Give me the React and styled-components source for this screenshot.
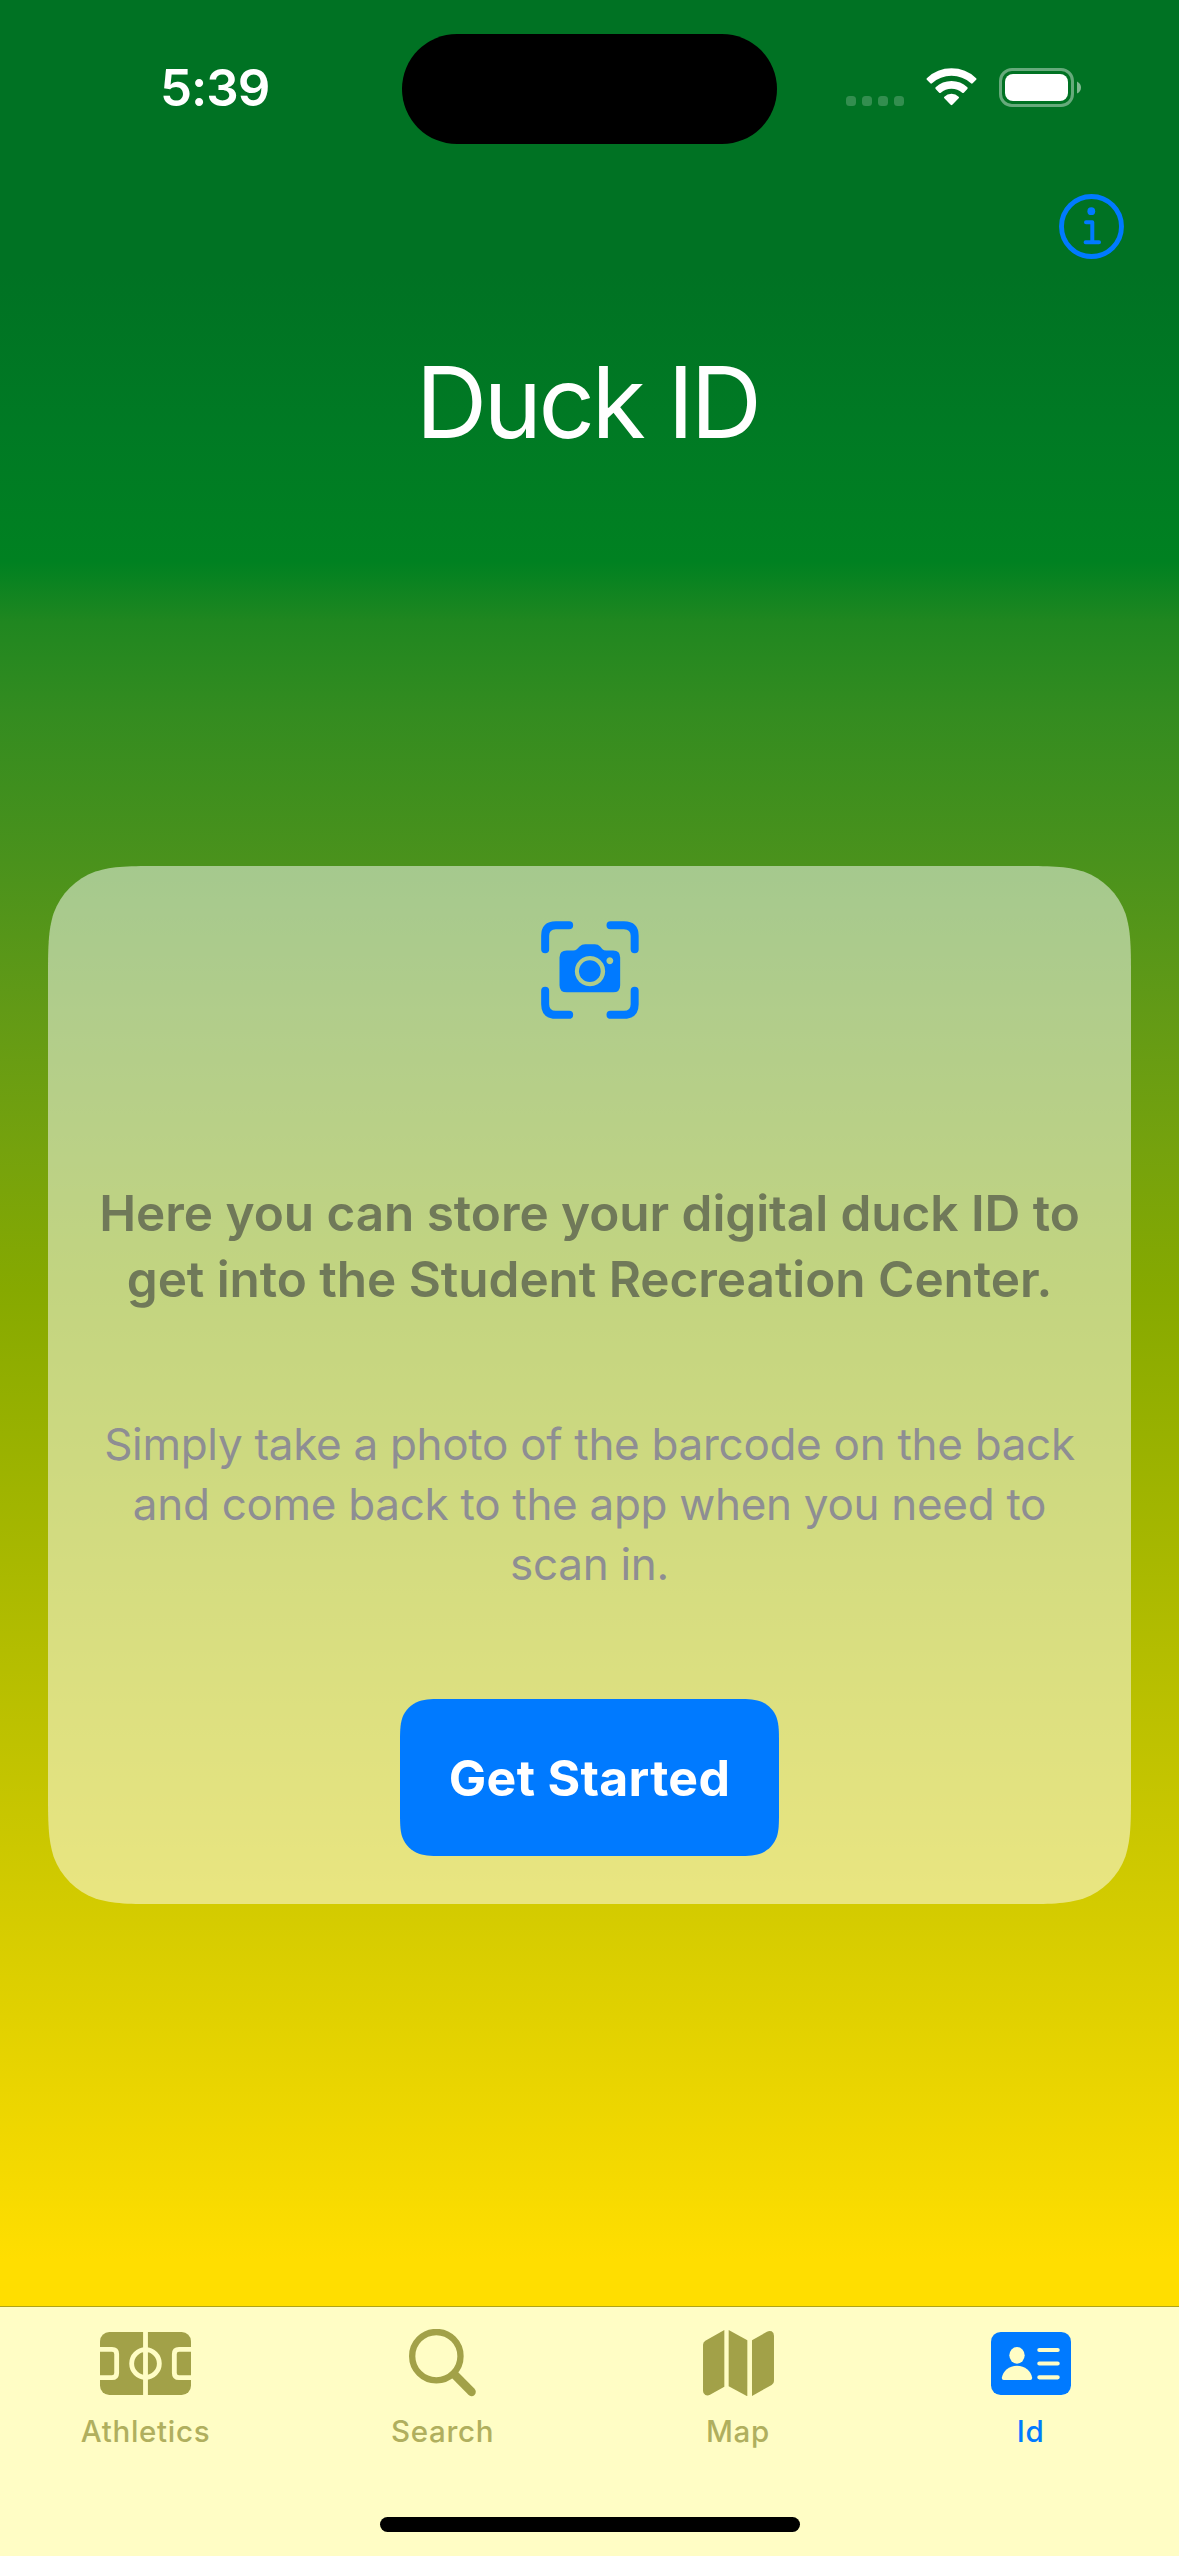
import React from "react";
import styled, { createGlobalStyle } from "styled-components";

const BLUE = "#007aff";
const OLIVE = "#a2a148";
const TAB_BG = "#fffdc5";

// Continuous-curvature rounded rectangle outline, usable in clip-path.
const smoothRect = (w, h, r) => {
  const a = 1.528665 * r;
  const b = 1.088493 * r;
  const c = 0.868407 * r;
  const d = 0.631494 * r;
  const e = 0.074911 * r;
  const f = 0.372824 * r;
  const g = 0.169059 * r;
  const corners = [
    (x, y) => [w - x, y],
    (x, y) => [w - y, h - x],
    (x, y) => [x, h - y],
    (x, y) => [y, x],
  ];
  const path = corners
    .map((at, i) => {
      const p = (x, y) => at(x, y).map((n) => n.toFixed(2)).join(" ");
      return (
        `${i ? "L" : "M"}${p(a, 0)} C${p(b, 0)} ${p(c, 0)} ${p(d, e)} ` +
        `C${p(f, g)} ${p(g, f)} ${p(e, d)} C${p(0, c)} ${p(0, b)} ${p(0, a)}`
      );
    })
    .join(" ");
  return `path("${path} Z")`;
};

const GlobalStyle = createGlobalStyle`
  *, *::before, *::after { box-sizing: border-box; }
  body { margin: 0; }
`;

const Screen = styled.div`
  display: flex;
  flex-direction: column;
  width: 1179px;
  height: 2556px;
  overflow: hidden;
  font-family: Inter, "Liberation Sans", sans-serif;
  background: linear-gradient(
    to bottom,
    #007223 0,
    #007223 270px,
    #007a24 430px,
    #008121 562px,
    #208720 622px,
    #348c20 714px,
    #4a921c 862px,
    #629a16 1010px,
    #75a20d 1150px,
    #86a900 1290px,
    #d3cb00 1904px,
    #ffde00 2260px
  );
`;

const StatusBar = styled.header`
  display: grid;
  grid-template-columns: 402px 375px 402px;
  height: 177px;
  padding-top: 33px;
`;

const Time = styled.time`
  padding: 23px 0 0 160px;
  font-size: 51px;
  font-weight: 600;
  line-height: 64px;
  letter-spacing: -1px;
  color: #fff;
`;

const Island = styled.div`
  height: 110px;
  margin-top: 1px;
  border-radius: 55px;
  background: #000;
`;

const StatusIcons = styled.div`
  display: flex;
  align-items: flex-end;
  height: 74px;
  padding-left: 69px;
`;

const Cellular = styled.div`
  display: flex;
  gap: 6px;
  margin: 0 22px 1px 0;
`;

const CellDot = styled.i`
  width: 10px;
  height: 10px;
  border-radius: 3.5px;
  background: rgba(255, 255, 255, 0.2);
`;

const WifiIcon = styled.svg`
  width: 51px;
  height: 38px;
  margin: 0 22px 1px 0;
`;

const BatteryIcon = styled.svg`
  width: 82px;
  height: 39px;
`;

const Toolbar = styled.div`
  display: flex;
  justify-content: flex-end;
  padding: 17px 55px 0 0;
`;

const InfoButton = styled.button`
  width: 65px;
  height: 65px;
  padding: 0;
  border: 0;
  background: none;
  svg { display: block; }
`;

const Title = styled.h1`
  margin: 83px 0 0;
  padding-right: 5px;
  font-size: 99px;
  font-weight: 400;
  line-height: 120px;
  letter-spacing: -3.6px;
  word-spacing: 1px;
  text-align: center;
  color: #fff;
`;

const Content = styled.main`
  flex: 1;
  display: flex;
  align-items: center;
  justify-content: center;
  padding-top: 2px;
`;

const Card = styled.section`
  display: flex;
  flex-direction: column;
  align-items: center;
  width: 1083px;
  height: 1038px;
  padding-top: 55px;
  background: rgba(255, 255, 255, 0.5);
  clip-path: ${smoothRect(1083, 1038, 75)};
`;

const Heading = styled.h2`
  margin: 161px 0 0;
  font-size: 49.5px;
  font-weight: 600;
  line-height: 66px;
  letter-spacing: -0.05px;
  text-align: center;
  color: #707959;
`;

const Copy = styled.p`
  margin: 102px 0 0;
  font-size: 44px;
  line-height: 60px;
  letter-spacing: -0.3px;
  text-align: center;
  color: #8e8e93;
`;

const PrimaryButton = styled.button`
  width: 379px;
  height: 157px;
  margin-top: 105px;
  padding: 0;
  border: 0;
  font: 700 50px Inter, sans-serif;
  letter-spacing: 0.3px;
  color: #fff;
  background: ${BLUE};
  clip-path: ${smoothRect(379, 157, 30)};
`;

const TabBar = styled.nav`
  display: grid;
  grid-template-columns: 291px 303px 288px 297px;
  grid-template-rows: 210px 15px;
  height: 250px;
  border-top: 1px solid #b0a417;
  background: ${TAB_BG};
`;

const Tab = styled.a`
  display: flex;
  flex-direction: column;
  align-items: center;
  padding-top: 20px;
  font-size: 29.5px;
  font-weight: 500;
  line-height: 36px;
  letter-spacing: 0.7px;
  color: ${(p) => (p.$active ? BLUE : "#b0af5e")};
`;

const TabIcon = styled.span`
  display: flex;
  align-items: center;
  justify-content: center;
  height: 72px;
  margin-bottom: 14px;
  color: ${(p) => (p.$active ? BLUE : OLIVE)};
`;

const HomeIndicator = styled.div`
  grid-column: 1 / -1;
  justify-self: center;
  width: 420px;
  height: 15px;
  border-radius: 8px;
  background: #000;
`;

const Wifi = () => (
  <WifiIcon viewBox="378 116 153 114" fill="#fff">
    <path d="M380.500 151.500 Q378 149 380.500 146.500 Q412 117 454.500 117 Q497 117 528.500 146.500 Q531 149 528.500 151.500 L518 162 Q515.500 164.500 513 162 Q488 139.500 454.500 139.500 Q421 139.500 396 162 Q393.500 164.500 391 162 Z" />
    <path d="M407 179 Q404.500 176.500 407 174 Q427 155 454.500 155 Q482 155 502 174 Q504.500 176.500 502 179 L491.500 190 Q489 192.500 486.500 190 Q473 178 454.500 178 Q436 178 422.500 190 Q420 192.500 417.500 190 Z" />
    <path d="M433 207 Q430.500 204.500 433 202 Q442 193 454.500 193 Q467 193 476 202 Q478.500 204.500 476 207 L457 226.500 Q454.500 229 452 226.500 Z" />
  </WifiIcon>
);

const Battery = () => (
  <BatteryIcon viewBox="0 0 82 39">
    <rect x="1.500" y="1.500" width="72" height="36" rx="11.500" fill="none" stroke="#fff" strokeOpacity=".4" strokeWidth="3" />
    <rect x="6" y="6" width="63" height="27" rx="8" fill="#fff" />
    <path d="M78 13.500 Q82 15.500 82 19.500 Q82 23.500 78 25.500 Z" fill="#fff" fillOpacity=".5" />
  </BatteryIcon>
);

const Info = () => (
  <svg width="65" height="65" viewBox="0 0 65 65" fill="none" stroke={BLUE} strokeLinecap="round" strokeLinejoin="round">
    <circle cx="32.500" cy="32.500" r="30" strokeWidth="4.900" />
    <circle cx="32.300" cy="17.200" r="3.900" fill={BLUE} stroke="none" />
    <path d="M27 28.200 H33.300 V47.600 M26.600 48.200 H40" strokeWidth="4" />
  </svg>
);

const CameraViewfinder = () => (
  <svg width="98" height="98" viewBox="122.500 92.500 294 294">
    <g fill="none" stroke={BLUE} strokeWidth="24" strokeLinecap="round">
      <path d="M135 177 V137 Q135 105 167 105 H207" />
      <path d="M331 105 H371 Q403.500 105 403.500 137 V177" />
      <path d="M403.500 302 V342 Q403.500 374 371 374 H331" />
      <path d="M207 374 H167 Q135 374 135 342 V302" />
    </g>
    <path
      fill={BLUE}
      fillRule="evenodd"
      d="M200 181 H219 Q226 181 230 177 L238 169 Q245 162 255 162 H284 Q294 162 300 169 L307 177 Q311 181 318 181 H339 Q360 181 360 202 V285 Q360 306.500 339 306.500 H200 Q178 306.500 178 285 V202 Q178 181 200 181 Z M269.500 197.500 a45.500 45.500 0 1 0 .01 0 Z M329 201.500 a10.300 10.300 0 1 0 .01 0 Z"
    />
    <circle cx="269" cy="243" r="32.500" fill={BLUE} />
  </svg>
);

const FieldIcon = () => (
  <svg width="91" height="63" viewBox="120 126 273 189">
    <rect x="120" y="126" width="273" height="189" rx="28" fill="currentColor" />
    <g fill="none" stroke={TAB_BG} strokeWidth="14.500">
      <path d="M256.500 126 V315" />
      <circle cx="256.500" cy="220.500" r="41.500" />
      <path d="M113 178 H156 Q170 178 170 192 V249 Q170 263 156 263 H113" />
      <path d="M400 178 H357 Q343 178 343 192 V249 Q343 263 357 263 H400" />
    </g>
  </svg>
);

const SearchIcon = () => (
  <svg width="67" height="67.300" viewBox="1047 119.500 201 202" fill="none" stroke="currentColor" strokeLinecap="round">
    <circle cx="1129" cy="201" r="72.500" strokeWidth="19" />
    <path d="M1184 257 L1234.500 308" strokeWidth="26" />
  </svg>
);

const MapIcon = () => (
  <svg width="71" height="66.300" viewBox="126 122 213 199" fill="currentColor">
    <path d="M190 122 V292 L147 316 Q140 320 133 317 Q126 314 126 305 V166 Q126 158 133 154 Z" />
    <path d="M203 122 L259 153 V321 L203 291 Z" />
    <path d="M273 153 L318 127 Q325 123 332 126 Q339 130 339 139 V275 Q339 283 332 287 L273 320 Z" />
  </svg>
);

const IdCardIcon = () => (
  <svg width="80" height="63" viewBox="993 126 240 189">
    <rect x="993" y="126" width="240" height="189" rx="29" fill="currentColor" />
    <g fill={TAB_BG}>
      <ellipse cx="1071" cy="196" rx="23" ry="25" />
      <path d="M1031 270 Q1025 270 1025.500 263 C1029 243 1047 227 1071 227 C1095 227 1113 243 1116.500 263 Q1117 270 1111 270 Z" />
    </g>
    <path d="M1138 180 H1193 M1138 220.500 H1193 M1138 262 H1193" stroke={TAB_BG} strokeWidth="12.500" strokeLinecap="round" />
  </svg>
);

const tabs = [
  { label: "Athletics", Icon: FieldIcon },
  { label: "Search", Icon: SearchIcon },
  { label: "Map", Icon: MapIcon },
  { label: "Id", Icon: IdCardIcon, active: true },
];

export default function App() {
  return (
    <>
      <GlobalStyle />
      <Screen>
        <StatusBar>
          <Time>5:39</Time>
          <Island />
          <StatusIcons>
            <Cellular>
              <CellDot />
              <CellDot />
              <CellDot />
              <CellDot />
            </Cellular>
            <Wifi />
            <Battery />
          </StatusIcons>
        </StatusBar>
        <Toolbar>
          <InfoButton aria-label="Info">
            <Info />
          </InfoButton>
        </Toolbar>
        <Title>Duck ID</Title>
        <Content>
          <Card>
            <CameraViewfinder />
            <Heading>
              Here you can store your digital duck ID to
              <br />
              get into the Student Recreation Center.
            </Heading>
            <Copy>
              Simply take a photo of the barcode on the back
              <br />
              and come back to the app when you need to
              <br />
              scan in.
            </Copy>
            <PrimaryButton>Get Started</PrimaryButton>
          </Card>
        </Content>
        <TabBar>
          {tabs.map(({ label, Icon, active }) => (
            <Tab key={label} $active={active}>
              <TabIcon $active={active}>
                <Icon />
              </TabIcon>
              {label}
            </Tab>
          ))}
          <HomeIndicator />
        </TabBar>
      </Screen>
    </>
  );
}
